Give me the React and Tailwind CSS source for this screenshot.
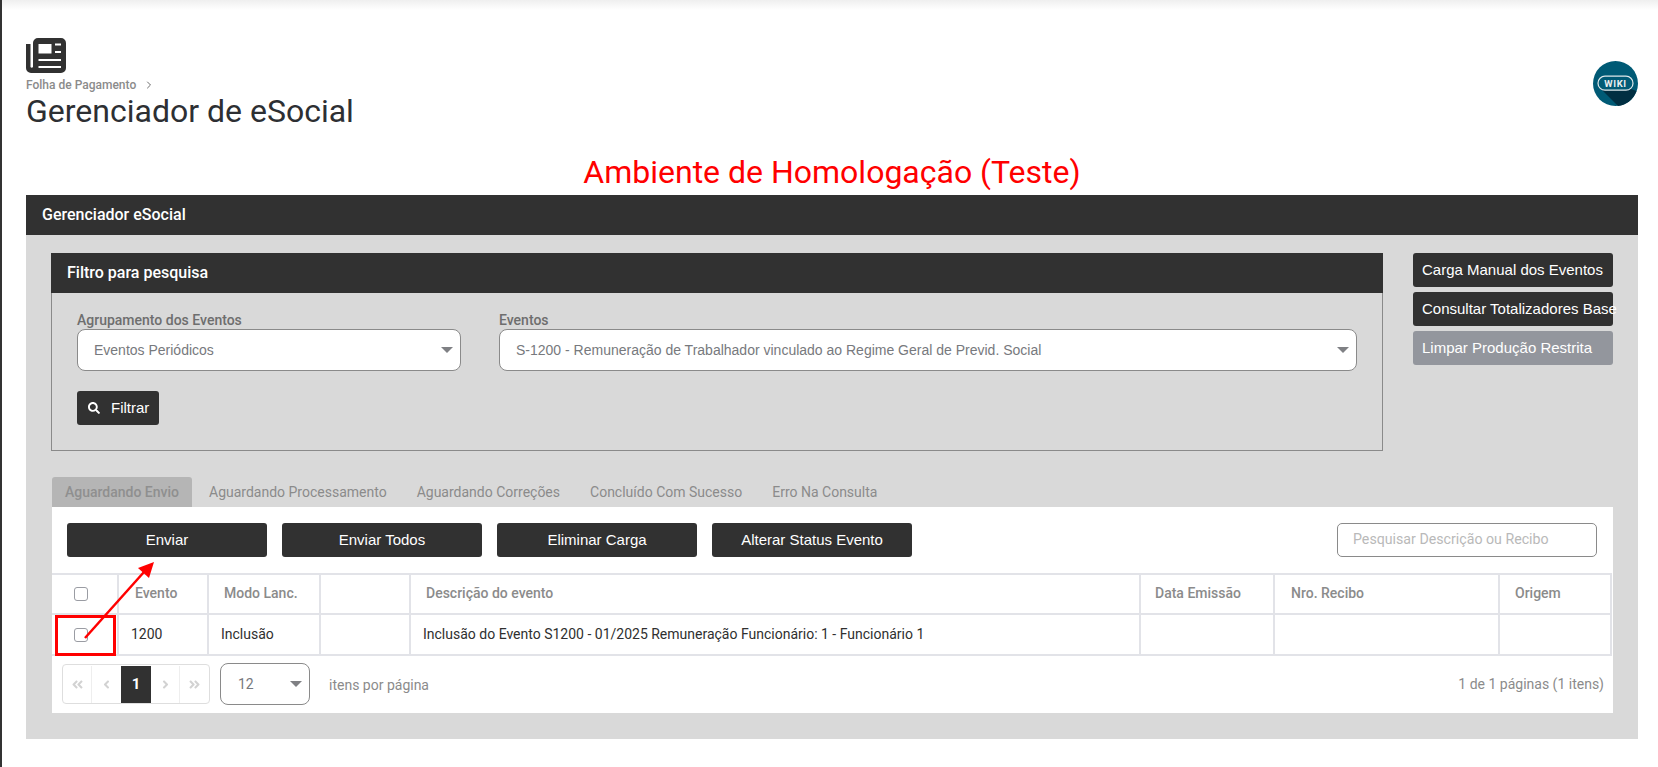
import React from "react";
import { FaSearch, FaAngleLeft, FaAngleRight, FaAngleDoubleLeft, FaAngleDoubleRight } from "react-icons/fa";
import { FiChevronRight } from "react-icons/fi";

const roboto = "font-['Roboto',sans-serif]";
const arial = "font-['Liberation_Sans',Arial,sans-serif]";

function PageIcon() {
  return (
    <svg viewBox="0 0 40 36" className="w-[40px] h-[36px] block">
      <path d="M12 0 H35 A5 5 0 0 1 40 5 V30 A5 5 0 0 1 35 35 H5 A5 5 0 0 1 0 30 V6 H4.5 V29 A1.5 1.5 0 0 0 7 29 V5 A5 5 0 0 1 12 0 Z" fill="#313131" fillRule="evenodd" />
      <rect x="12.5" y="6" width="13" height="9.5" fill="#fff" />
      <rect x="29" y="5.5" width="6" height="2" fill="#fff" />
      <rect x="29" y="13" width="6" height="2" fill="#fff" />
      <rect x="12.5" y="21" width="22.5" height="2" fill="#fff" />
      <rect x="12.5" y="28" width="22.5" height="2" fill="#fff" />
    </svg>
  );
}

function WikiLogo() {
  return (
    <svg viewBox="0 0 45 45" className="w-[45px] h-[45px]">
      <circle cx="22.5" cy="22.5" r="22.5" fill="#005a75" />
      <path d="M8 28 L38 28 L43.5 30 A22.5 22.5 0 0 1 25 45 Z" fill="#012f42" />
      <rect x="5" y="15.2" width="35" height="14" rx="7" fill="#005a75" stroke="#dfe8ea" strokeWidth="1.2" />
      <text x="22.5" y="25.8" textAnchor="middle" fontFamily="Roboto" fontWeight="700" fontSize="9.5" letterSpacing="0.6" fill="#e8eef0">WIKI</text>
    </svg>
  );
}

function Caret() {
  return (
    <svg viewBox="0 0 12 6" className="w-[12px] h-[6px] shrink-0">
      <path d="M0 0 H12 L6 6 Z" fill="#7f8084" />
    </svg>
  );
}

function Select({ text, className }) {
  return (
    <div className={`flex items-center justify-between h-[42px] bg-white border border-[#8a8a8a] rounded-[8px] pl-[16px] pr-[7px] text-[14px] text-[#77797d] ${arial} ${className}`}>
      <span>{text}</span>
      <Caret />
    </div>
  );
}

function DarkBtn({ children }) {
  return (
    <button className={`w-[200px] h-[34px] bg-[#313131] rounded-[3px] text-white text-[15px] ${arial}`}>{children}</button>
  );
}

function SideBtn({ children, muted }) {
  return (
    <div className={`w-[200px] h-[34px] rounded-[3px] pl-[9px] flex items-center whitespace-nowrap text-white text-[15px] ${arial} ${muted ? "bg-[#93969d]" : "bg-[#313131]"}`}>{children}</div>
  );
}

const cols = "grid grid-cols-[67px_90px_112px_90px_730px_134px_225px_112px]";

function HeadCell({ children, className = "" }) {
  return <div className={`flex items-center border-r-2 border-[#e2e3e8] text-[14px] font-medium text-[#8b8b8b] ${className}`}>{children}</div>;
}

function RowCell({ children, className = "" }) {
  return <div className={`flex items-center border-r-2 border-[#e2e3e8] text-[14px] text-[#2f2f2f] ${className}`}>{children}</div>;
}

function Check() {
  return <span className="block w-[14px] h-[14px] rounded-[3px] border border-[#9a9ca3] bg-white" />;
}

function PageBtn({ children, active, className = "" }) {
  return (
    <div className={`h-[37px] flex items-center justify-center ${active ? "bg-[#313131] text-white font-bold text-[15px]" : "text-[#d2d2d2] border-r border-[#eeeeee]"} ${className}`}>{children}</div>
  );
}

export default function App() {
  const tabs = ["Aguardando Processamento", "Aguardando Correções", "Concluído Com Sucesso", "Erro Na Consulta"];
  return (
    <div className={`relative h-[767px] overflow-hidden bg-white border-l-2 border-[#333] ${roboto}`}>
      <div className="absolute top-0 left-0 right-0 h-[10px] bg-gradient-to-b from-[#efefef] to-white" />

      <div className="flex justify-between pt-[38px] pl-[24px] pr-[20px] h-[172px]">
        <div>
          <PageIcon />
          <div className="flex items-center gap-[7px] mt-[3px] h-[16px] text-[12px] font-medium text-[#8b8b8b]">
            Folha de Pagamento
            <FiChevronRight className="w-[12px] h-[12px] text-[#6e6e6e]" />
          </div>
          <h1 className="text-[32px] leading-[36px] text-[#2d2f33]">Gerenciador de eSocial</h1>
        </div>
        <div className="pt-[23px]"><WikiLogo /></div>
      </div>

      <div className="-mt-[20px] h-[43px] text-center text-[32px] leading-[40px] text-[#ff0000] pl-[4px]">Ambiente de Homologação (Teste)</div>

      <div className="ml-[24px] mr-[20px] bg-[#d9d9d9] h-[544px]">
        <div className="h-[40px] bg-[#313131] flex items-center pl-[16px] text-white text-[16px] font-medium">Gerenciador eSocial</div>

        <div className="flex pt-[18px] pl-[25px] pr-[25px] justify-between">
          <div className="w-[1332px] h-[198px] border border-[#8a8a8a] border-t-0">
            <div className="h-[40px] -mx-px bg-[#313131] flex items-center pl-[16px] text-white text-[16px] font-medium">Filtro para pesquisa</div>
            <div className="pl-[25px] pt-[18px]">
              <div className="flex gap-[38px]">
                <div>
                  <div className="h-[18px] text-[14px] font-medium text-[#6e6e6e] leading-[18px]">Agrupamento dos Eventos</div>
                  <Select text="Eventos Periódicos" className="w-[384px]" />
                </div>
                <div>
                  <div className="h-[18px] text-[14px] font-medium text-[#6e6e6e] leading-[18px]">Eventos</div>
                  <Select text="S-1200 - Remuneração de Trabalhador vinculado ao Regime Geral de Previd. Social" className="w-[858px]" />
                </div>
              </div>
              <button className={`mt-[20px] w-[82px] h-[34px] bg-[#313131] rounded-[3px] text-white text-[15px] flex items-center pl-[11px] gap-[11px] ${arial}`}>
                <FaSearch className="w-[12px] h-[12px]" />
                Filtrar
              </button>
            </div>
          </div>
          <div className="flex flex-col gap-[5px]">
            <SideBtn>Carga Manual dos Eventos</SideBtn>
            <SideBtn>Consultar Totalizadores Base</SideBtn>
            <SideBtn muted>Limpar Produção Restrita</SideBtn>
          </div>
        </div>

        <div className="ml-[26px] mr-[25px] mt-[26px]">
          <div className="flex h-[30px] text-[14px] text-[#8b8b8b]">
            <div className="w-[140px] bg-[#b5b5b5] rounded-t-[3px] flex items-center justify-center font-medium text-[#8f8f8f]">Aguardando Envio</div>
            <div className="flex items-center pl-[17px] gap-[30px]">
              {tabs.map(t => <span key={t}>{t}</span>)}
            </div>
          </div>

          <div className="relative bg-white h-[206px]">
            <div className="flex items-center gap-[15px] pt-[16px] pl-[15px] pr-[16px]">
              <DarkBtn>Enviar</DarkBtn>
              <DarkBtn>Enviar Todos</DarkBtn>
              <DarkBtn>Eliminar Carga</DarkBtn>
              <DarkBtn>Alterar Status Evento</DarkBtn>
              <div className="ml-auto w-[260px] h-[34px] border border-[#8a8a8a] rounded-[5px] flex items-center pl-[15px] text-[14.2px] text-[#b9b9b9]">Pesquisar Descrição ou Recibo</div>
            </div>

            <div className="mt-[16px] w-[1560px] border-t-2 border-[#e2e3e8]">
              <div className={`${cols} h-[40px] border-b-2 border-[#e2e3e8]`}>
                <HeadCell className="justify-center pr-[8px]"><Check /></HeadCell>
                <HeadCell className="pl-[16px] pb-px">Evento</HeadCell>
                <HeadCell className="pl-[15px] pb-px">Modo Lanc.</HeadCell>
                <HeadCell />
                <HeadCell className="pl-[15px] pb-px">Descrição do evento</HeadCell>
                <HeadCell className="pl-[14px] pb-px">Data Emissão</HeadCell>
                <HeadCell className="pl-[16px] pb-px">Nro. Recibo</HeadCell>
                <HeadCell className="pl-[15px] pb-px">Origem</HeadCell>
              </div>
              <div className={`${cols} h-[41px] border-b-2 border-[#e2e3e8]`}>
                <RowCell className="justify-center pr-[8px]"><Check /></RowCell>
                <RowCell className="pl-[12px]">1200</RowCell>
                <RowCell className="pl-[12px]">Inclusão</RowCell>
                <RowCell />
                <RowCell className="pl-[12px]">Inclusão do Evento S1200 - 01/2025 Remuneração Funcionário: 1 - Funcionário 1</RowCell>
                <RowCell />
                <RowCell />
                <RowCell />
              </div>
            </div>

            <div className="flex items-center pl-[10px] pr-[9px] pt-[7px]">
              <div className="flex h-[40px] w-[148px] border border-[#dedede] rounded-[4px] items-center text-[13px]">
                <PageBtn className="w-[29px]"><FaAngleDoubleLeft /></PageBtn>
                <PageBtn className="w-[29px] border-r-0"><FaAngleLeft /></PageBtn>
                <PageBtn active className="w-[30px]">1</PageBtn>
                <PageBtn className="w-[29px]"><FaAngleRight /></PageBtn>
                <PageBtn className="w-[29px] border-r-0"><FaAngleDoubleRight /></PageBtn>
              </div>
              <div className="ml-[10px] flex items-center justify-between w-[90px] h-[42px] border border-[#8a8a8a] rounded-[8px] pl-[17px] pr-[7px] text-[14px] text-[#77797d]">
                12
                <Caret />
              </div>
              <span className="ml-[19px] text-[14px] text-[#8b8b8b] pt-[2px]">itens por página</span>
              <span className="ml-auto text-[14px] text-[#8b8b8b]">1 de 1 páginas (1 itens)</span>
            </div>

            {/* annotation drawn over the table */}
            <div className="absolute left-[3px] top-[108px] w-[61px] h-[41px] border-[3px] border-[#ff0000]" />
            <svg className="absolute left-[29px] top-[50px] w-[80px] h-[90px]" viewBox="0 0 80 90">
              <path d="M4 81 L63 15" stroke="#ff0000" strokeWidth="2.5" fill="none" />
              <path d="M73 5 L68 21 L57 11 Z" fill="#ff0000" />
            </svg>
          </div>
        </div>
      </div>
    </div>
  );
}
